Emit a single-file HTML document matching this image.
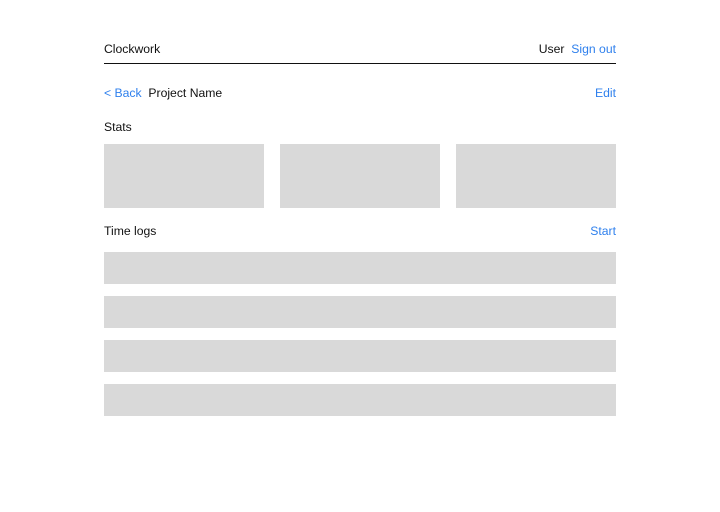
<!DOCTYPE html>
<html><head><style>
body{margin:0;width:720px;height:512px;background:#fff;font-family:"Liberation Sans",sans-serif;font-size:12.2px;color:#111;position:relative}
.t{position:absolute;line-height:16px}
.b{color:#2f80ed}
.g{position:absolute;background:#d9d9d9}
</style></head><body>
<div class="t" style="left:104px;top:41px">Clockwork</div>
<div class="t" style="right:104px;top:41px">User&nbsp;&nbsp;<span class="b">Sign out</span></div>
<div style="position:absolute;left:104px;top:63px;width:512px;height:1px;background:#111"></div>
<div class="t" style="left:104px;top:85px"><span class="b">&lt; Back</span>&nbsp;&nbsp;Project Name</div>
<div class="t b" style="right:104px;top:85px">Edit</div>
<div class="t" style="left:104px;top:119px">Stats</div>
<div class="g" style="left:104px;top:144px;width:160px;height:64px"></div>
<div class="g" style="left:280px;top:144px;width:160px;height:64px"></div>
<div class="g" style="left:456px;top:144px;width:160px;height:64px"></div>
<div class="t" style="left:104px;top:223px">Time logs</div>
<div class="t b" style="right:104px;top:223px">Start</div>
<div class="g" style="left:104px;top:252px;width:512px;height:32px"></div>
<div class="g" style="left:104px;top:296px;width:512px;height:32px"></div>
<div class="g" style="left:104px;top:340px;width:512px;height:32px"></div>
<div class="g" style="left:104px;top:384px;width:512px;height:32px"></div>
</body></html>
